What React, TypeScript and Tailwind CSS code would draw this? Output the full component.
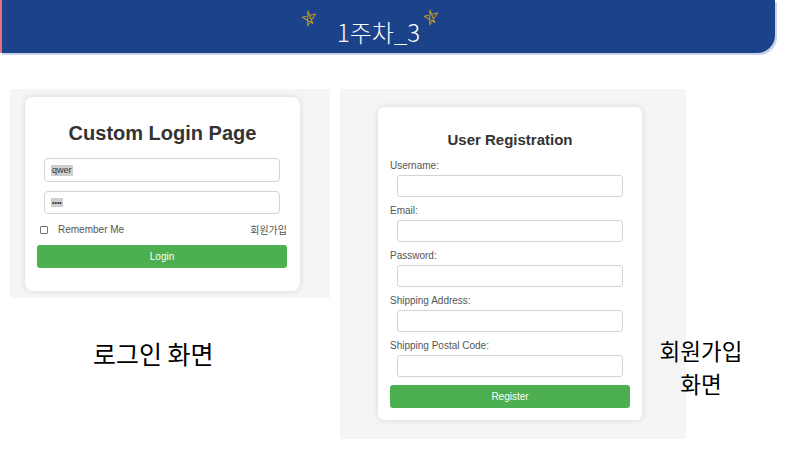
import React from 'react';

const Star = ({ className }: { className?: string }) => (
  <svg viewBox="0 0 20 20" className={className} fill="none">
    <polygon
      points="10,1 12.6,16.5 2,6.8 18,6.2 6.2,18"
      stroke="#b8962a"
      strokeWidth="1.3"
      strokeLinejoin="round"
      transform="rotate(-12 10 10)"
    />
  </svg>
);

const Field = ({ label }: { label: string }) => (
  <div className="flex flex-col">
    <span className="text-[10px] leading-[12px] text-[#555] ml-[12px]">{label}</span>
    <div className="ml-[19px] mt-[3px] w-[226px] h-[22px] rounded-[3px] border border-[#d4d4d4] bg-white" />
  </div>
);

export default function App() {
  return (
    <div className="w-[800px] h-[450px] bg-white overflow-hidden font-['Liberation_Sans',Arial,sans-serif]">
      {/* header */}
      <div className="relative w-[775px] h-[53px] bg-[#1c428a] rounded-br-[18px] border-l-2 border-[#e8707a] shadow-[2px_2px_0_#c9d3e6] flex items-center justify-center">
        <Star className="absolute left-[299px] top-[10px] w-[17px] h-[17px]" />
        <Star className="absolute left-[421px] top-[9px] w-[17px] h-[17px]" />
        <span className="mt-[10px] mr-[20px] text-white text-[24px] font-light font-['Noto_Sans_CJK_KR',sans-serif]">1주차_3</span>
      </div>

      <div className="flex items-start mt-[36px]">
        {/* login */}
        <div className="flex flex-col ml-[10px]">
          <div className="w-[320px] h-[209px] bg-[#f5f5f5] pt-[8px] pl-[15px]">
            <div className="w-[275px] h-[194px] bg-white rounded-[8px] shadow-[0_0_6px_rgba(0,0,0,0.12)] flex flex-col pt-[24px]">
              <h1 className="text-center text-[20px] leading-[24px] font-bold text-[#333]">Custom Login Page</h1>
              <div className="ml-[19px] mt-[13px] w-[236px] h-[24px] rounded-[4px] border border-[#d4d4d4] flex items-center px-[6px]">
                <span className="text-[9px] leading-[11px] bg-[#cfcfcf] text-[#333] px-[1px]">qwer</span>
              </div>
              <div className="ml-[19px] mt-[9px] w-[236px] h-[23px] rounded-[4px] border border-[#d4d4d4] flex items-center px-[6px]">
                <span className="text-[7px] leading-[9px] bg-[#cfcfcf] text-[#333] px-[1px]">••••</span>
              </div>
              <div className="ml-[15px] mt-[8px] w-[247px] flex items-center justify-between">
                <div className="flex items-center">
                  <div className="w-[8px] h-[8px] border border-[#777] rounded-[1px]" />
                  <span className="ml-[10px] text-[10px] text-[#555]">Remember Me</span>
                </div>
                <span className="text-[10px] text-[#555] font-['Noto_Sans_CJK_KR',sans-serif]">회원가입</span>
              </div>
              <div className="ml-[12px] mt-[8px] w-[250px] h-[23px] rounded-[3px] bg-[#4caf50] flex items-center justify-center text-white text-[10px]">
                Login
              </div>
            </div>
          </div>
          <div className="mt-[40px] ml-[83px] text-[25px] leading-[30px] text-black font-['Noto_Sans_CJK_KR',sans-serif]">
            로그인 화면
          </div>
        </div>

        {/* register */}
        <div className="ml-[10px] w-[346px] h-[350px] bg-[#f5f5f5] pt-[18px] pl-[38px]">
          <div className="w-[264px] h-[313px] bg-white rounded-[6px] shadow-[0_0_6px_rgba(0,0,0,0.12)] flex flex-col pt-[24px]">
            <h2 className="text-center text-[15px] leading-[18px] font-bold text-[#333]">User Registration</h2>
            <div className="flex flex-col gap-[8px] mt-[11px]">
              <Field label="Username:" />
              <Field label="Email:" />
              <Field label="Password:" />
              <Field label="Shipping Address:" />
              <Field label="Shipping Postal Code:" />
            </div>
            <div className="ml-[12px] mt-[8px] w-[240px] h-[23px] rounded-[3px] bg-[#4caf50] flex items-center justify-center text-white text-[10px]">
              Register
            </div>
          </div>
        </div>

        <div className="ml-[-40px] mt-[245px] w-[110px] flex flex-col items-center text-[22.5px] leading-[33px] text-black font-['Noto_Sans_CJK_KR',sans-serif]">
          <span>회원가입</span>
          <span>화면</span>
        </div>
      </div>
    </div>
  );
}
